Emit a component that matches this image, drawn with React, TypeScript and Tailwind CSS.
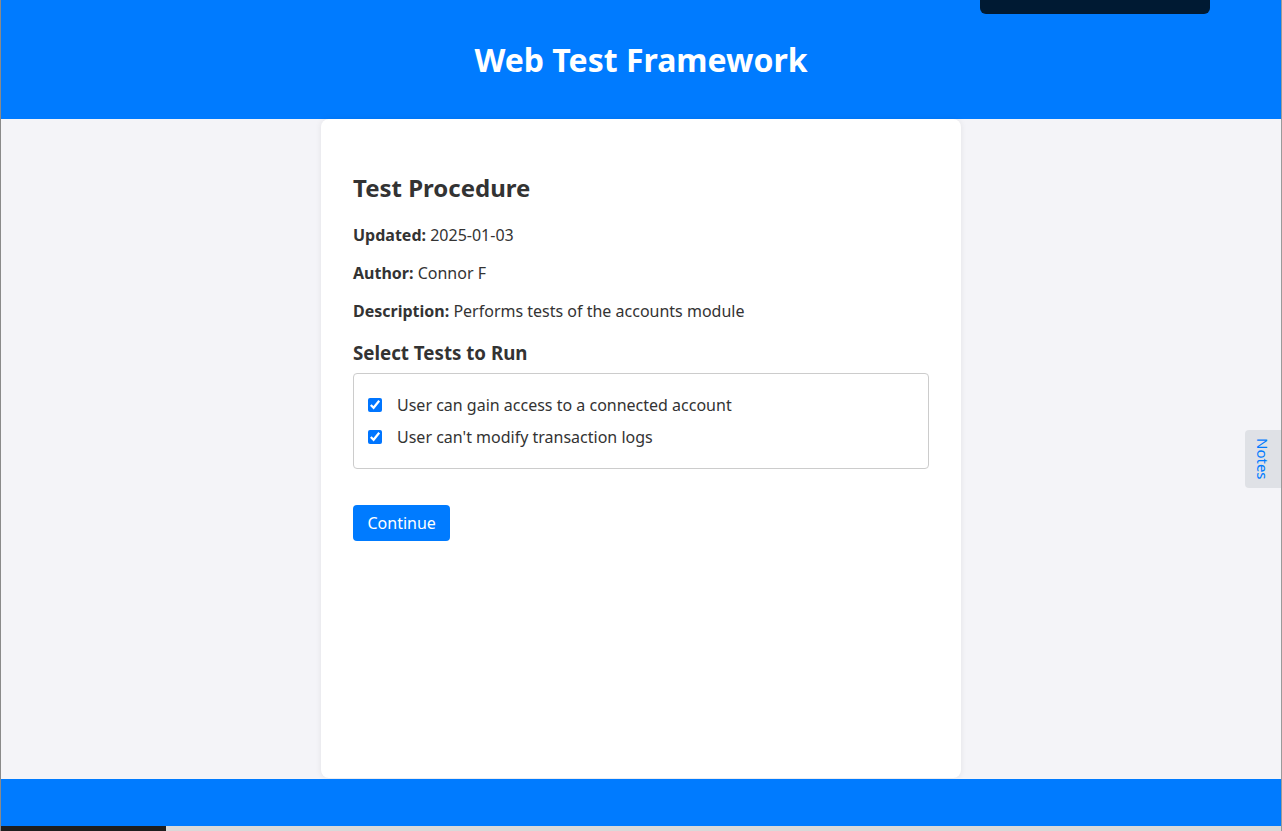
const tests = [
	'User can gain access to a connected account',
	"User can't modify transaction logs"
]

const Meta = ({ label, value }: { label: string; value: string }) => (
	<p className="mt-4 leading-[22px]">
		<span className="font-bold">{label}</span> {value}
	</p>
)

export default function App() {
	return (
		<div className="relative flex h-[831px] w-full flex-col overflow-hidden border-l border-r border-l-[#8a8a8a] border-r-[#9a9a9a] font-['Noto_Sans',sans-serif] text-[16px] text-[#333]">
			<div className="absolute top-0 left-[979px] h-[14px] w-[230px] rounded-b-md bg-[#001a33]" />

			<header className="flex h-[119px] shrink-0 items-center justify-center bg-[#007bff]">
				<h1 className="text-[32px] font-bold text-white">Web Test Framework</h1>
			</header>

			<main className="flex flex-1 justify-center bg-[#f4f4f8]">
				<section className="mb-px w-[640px] rounded-lg bg-white px-8 pt-[52px] shadow-[0_0_6px_rgba(0,0,0,0.08)]">
					<h2 className="text-[24px] leading-[33px] font-bold">Test Procedure</h2>
					<div className="pt-1">
						<Meta label="Updated:" value="2025-01-03" />
						<Meta label="Author:" value="Connor F" />
						<Meta label="Description:" value="Performs tests of the accounts module" />
					</div>

					<h3 className="mt-[18px] text-[18.72px] leading-[26px] font-bold">Select Tests to Run</h3>
					<div className="mt-[7px] flex flex-col gap-[10px] rounded border border-[#ccc] px-[14px] py-[20px]">
						{tests.map((t) => (
							<label key={t} className="flex items-center gap-[15px] leading-[22px]">
								<input type="checkbox" defaultChecked className="m-0 h-[14px] w-[14px] accent-[#0075ff]" />
								<span>{t}</span>
							</label>
						))}
					</div>

					<button className="mt-[36px] h-9 rounded bg-[#007bff] px-[14.5px] text-[16px] text-white">
						Continue
					</button>
				</section>
			</main>

			<footer className="h-[47px] shrink-0 bg-[#007bff]" />
			<div className="flex h-[5px] shrink-0">
				<div className="w-[165px] bg-[#1e1e1e]" />
				<div className="flex-1 bg-[#d9d9d9]" />
			</div>

			<div className="absolute top-[430px] right-0 flex h-[58px] w-[36px] items-center justify-center rounded-l bg-[#dfe1e6]">
				<span className="text-[15px] text-[#007bff] [writing-mode:vertical-rl]">Notes</span>
			</div>
		</div>
	)
}
